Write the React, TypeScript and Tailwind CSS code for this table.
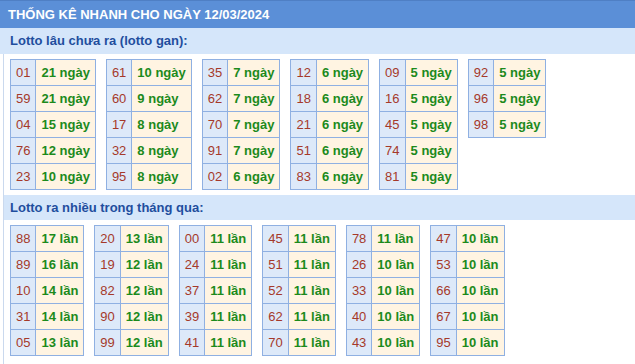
import React from "react";

type Row = [string, string];

const ganTables: Row[][] = [
  [["01", "21 ngày"], ["59", "21 ngày"], ["04", "15 ngày"], ["76", "12 ngày"], ["23", "10 ngày"]],
  [["61", "10 ngày"], ["60", "9 ngày"], ["17", "8 ngày"], ["32", "8 ngày"], ["95", "8 ngày"]],
  [["35", "7 ngày"], ["62", "7 ngày"], ["70", "7 ngày"], ["91", "7 ngày"], ["02", "6 ngày"]],
  [["12", "6 ngày"], ["18", "6 ngày"], ["21", "6 ngày"], ["51", "6 ngày"], ["83", "6 ngày"]],
  [["09", "5 ngày"], ["16", "5 ngày"], ["45", "5 ngày"], ["74", "5 ngày"], ["81", "5 ngày"]],
  [["92", "5 ngày"], ["96", "5 ngày"], ["98", "5 ngày"]],
];

const hotTables: Row[][] = [
  [["88", "17 lần"], ["89", "16 lần"], ["10", "14 lần"], ["31", "14 lần"], ["05", "13 lần"]],
  [["20", "13 lần"], ["19", "12 lần"], ["82", "12 lần"], ["90", "12 lần"], ["99", "12 lần"]],
  [["00", "11 lần"], ["24", "11 lần"], ["37", "11 lần"], ["39", "11 lần"], ["41", "11 lần"]],
  [["45", "11 lần"], ["51", "11 lần"], ["52", "11 lần"], ["62", "11 lần"], ["70", "11 lần"]],
  [["78", "11 lần"], ["26", "10 lần"], ["33", "10 lần"], ["40", "10 lần"], ["43", "10 lần"]],
  [["47", "10 lần"], ["53", "10 lần"], ["66", "10 lần"], ["67", "10 lần"], ["95", "10 lần"]],
];

function LottoTable({ rows }: { rows: Row[] }) {
  return (
    <div className="grid grid-cols-[auto_auto] self-start border-l border-t border-[#8fb0e2]">
      {rows.map(([num, val]) => (
        <React.Fragment key={num}>
          <div className="flex h-[26px] items-center border-b border-r border-[#8fb0e2] bg-[#dde9f9] px-[5px] text-[13px] text-[#a5392a]">
            {num}
          </div>
          <div className="flex h-[26px] items-center border-b border-r border-[#8fb0e2] bg-[#fff4e2] px-[5px] text-[13px] font-bold text-[#1c8a1c]">
            {val}
          </div>
        </React.Fragment>
      ))}
    </div>
  );
}

export default function App() {
  return (
    <div className="h-[364px] w-[635px] overflow-hidden bg-white font-['Liberation_Sans',Arial,sans-serif]">
      <div className="flex h-[28px] items-center border-t border-[#4f7fc4] bg-[#5b8fd7] pl-[8px] text-[13px] font-bold text-white">
        THỐNG KÊ NHANH CHO NGÀY 12/03/2024
      </div>
      <div className="flex h-[26px] items-center bg-[#d5e6fa] pl-[10px] text-[13px] font-bold text-[#1f4e9e]">
        Lotto lâu chưa ra (lotto gan):
      </div>
      <div className="ml-[3px] border-l border-[#cad9ee] pb-[10px]">
        <div className="flex gap-[10px] py-[5px] pl-[6px]">
          {ganTables.map((rows, i) => (
            <LottoTable key={i} rows={rows} />
          ))}
        </div>
        <div className="flex h-[25px] items-center bg-[#d5e6fa] pl-[6px] text-[13px] font-bold text-[#1f4e9e]">
          Lotto ra nhiều trong tháng qua:
        </div>
        <div className="flex gap-[10px] py-[5px] pl-[6px]">
          {hotTables.map((rows, i) => (
            <LottoTable key={i} rows={rows} />
          ))}
        </div>
      </div>
    </div>
  );
}
